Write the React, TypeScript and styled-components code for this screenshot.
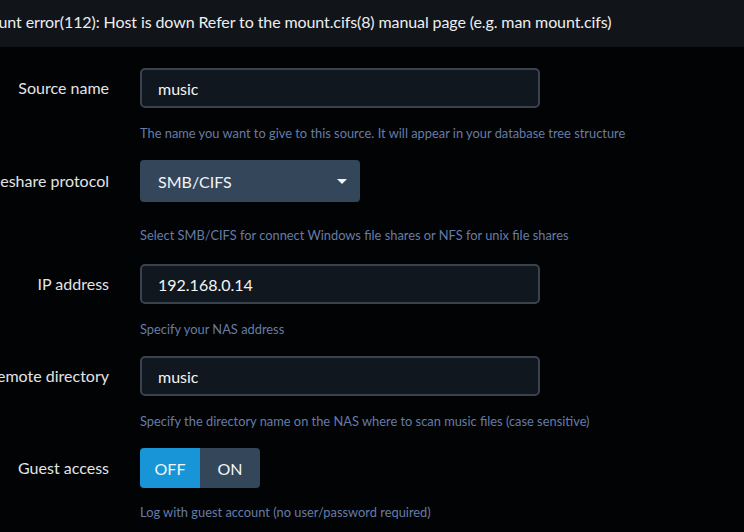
import React from "react";
import styled, { createGlobalStyle } from "styled-components";

const GlobalStyle = createGlobalStyle`
  html, body {
    margin: 0;
    padding: 0;
    background: #020304;
    overflow: hidden;
  }
  body {
    font-family: Lato, "Open Sans", sans-serif;
  }
`;

type Kind = "input" | "select" | "toggle";

type Field = {
  label: string;
  help: string;
  kind: Kind;
  value?: string;
};

const fields: Field[] = [
  {
    label: "Source name",
    kind: "input",
    value: "music",
    help: "The name you want to give to this source. It will appear in your database tree structure",
  },
  {
    label: "Fileshare protocol",
    kind: "select",
    value: "SMB/CIFS",
    help: "Select SMB/CIFS for connect Windows file shares or NFS for unix file shares",
  },
  {
    label: "IP address",
    kind: "input",
    value: "192.168.0.14",
    help: "Specify your NAS address",
  },
  {
    label: "Remote directory",
    kind: "input",
    value: "music",
    help: "Specify the directory name on the NAS where to scan music files (case sensitive)",
  },
  {
    label: "Guest access",
    kind: "toggle",
    help: "Log with guest account (no user/password required)",
  },
];

// space above / below the help line, per kind of control
const helpGap: Record<Kind, [number, number]> = {
  input: [17, 0],
  select: [25, 2],
  toggle: [16, 0],
};

const App = () => {
  return (
    <Page>
      <GlobalStyle />
      <ErrorBar>
        <span className="msg">
          Mount error(112): Host is down Refer to the mount.cifs(8) manual page
          (e.g. man mount.cifs)
        </span>
      </ErrorBar>
      <Form>
        {fields.map((f) => (
          <Row key={f.label}>
            <Label $tall={f.kind === "select"}>
              <span>{f.label}</span>
            </Label>
            <Control>
              {f.kind === "input" && <TextBox>{f.value}</TextBox>}
              {f.kind === "select" && (
                <SelectBox>
                  <span>{f.value}</span>
                  <Caret />
                </SelectBox>
              )}
              {f.kind === "toggle" && (
                <Toggle>
                  <ToggleBtn $active>OFF</ToggleBtn>
                  <ToggleBtn>ON</ToggleBtn>
                </Toggle>
              )}
              <Help $top={helpGap[f.kind][0]} $bottom={helpGap[f.kind][1]}>
                {f.help}
              </Help>
            </Control>
          </Row>
        ))}
      </Form>
    </Page>
  );
};

export default App;

const Page = styled.div`
  width: 744px;
  height: 532px;
  background: #020304;
  color: #e4e6e9;
`;

const ErrorBar = styled.div`
  height: 47px;
  background: #111419;
  display: flex;
  align-items: center;
  padding-bottom: 4px;
  box-sizing: border-box;
  overflow: hidden;
  white-space: nowrap;

  .msg {
    margin-left: -25px;
    font-size: 16px;
    letter-spacing: -0.1px;
    color: #eceef0;
  }
`;

const Form = styled.div`
  display: flex;
  flex-direction: column;
  gap: 19px;
  padding-top: 21px;
`;

const Row = styled.div`
  display: grid;
  grid-template-columns: 109px 1fr;
  column-gap: 31px;
`;

const Label = styled.div<{ $tall?: boolean }>`
  display: flex;
  justify-content: flex-end;
  height: ${(p) => (p.$tall ? 42 : 40)}px;
  align-items: center;
  white-space: nowrap;
  font-size: 16px;
  color: #e2e4e7;
  padding-bottom: 1px;
  box-sizing: border-box;
`;

const Control = styled.div`
  display: flex;
  flex-direction: column;
  align-items: flex-start;
`;

const TextBox = styled.div`
  width: 400px;
  height: 40px;
  box-sizing: border-box;
  border: 2px solid #39434e;
  border-radius: 5px;
  background: #11171e;
  color: #f4f5f6;
  font-size: 16px;
  padding: 0 16px;
  display: flex;
  align-items: center;
`;

const SelectBox = styled.div`
  width: 220px;
  height: 42px;
  box-sizing: border-box;
  border-radius: 4px;
  background: #33465a;
  color: #f2f4f6;
  font-size: 16px;
  padding: 0 13px 0 18px;
  display: flex;
  align-items: center;
  justify-content: space-between;
`;

const Caret = styled.span`
  width: 0;
  height: 0;
  border-left: 5px solid transparent;
  border-right: 5px solid transparent;
  border-top: 5px solid #f2f4f6;
`;

const Toggle = styled.div`
  display: flex;
  height: 40px;
  border-radius: 4px;
  overflow: hidden;
`;

const ToggleBtn = styled.div<{ $active?: boolean }>`
  width: 60px;
  display: flex;
  align-items: center;
  justify-content: center;
  font-size: 16px;
  color: #f4f6f8;
  background: ${(p) => (p.$active ? "#1795d7" : "#33465a")};
`;

const Help = styled.div<{ $top: number; $bottom: number }>`
  margin-top: ${(p) => p.$top}px;
  margin-bottom: ${(p) => p.$bottom}px;
  font-size: 12.85px;
  line-height: 16px;
  color: #667ca8;
  white-space: nowrap;
`;
